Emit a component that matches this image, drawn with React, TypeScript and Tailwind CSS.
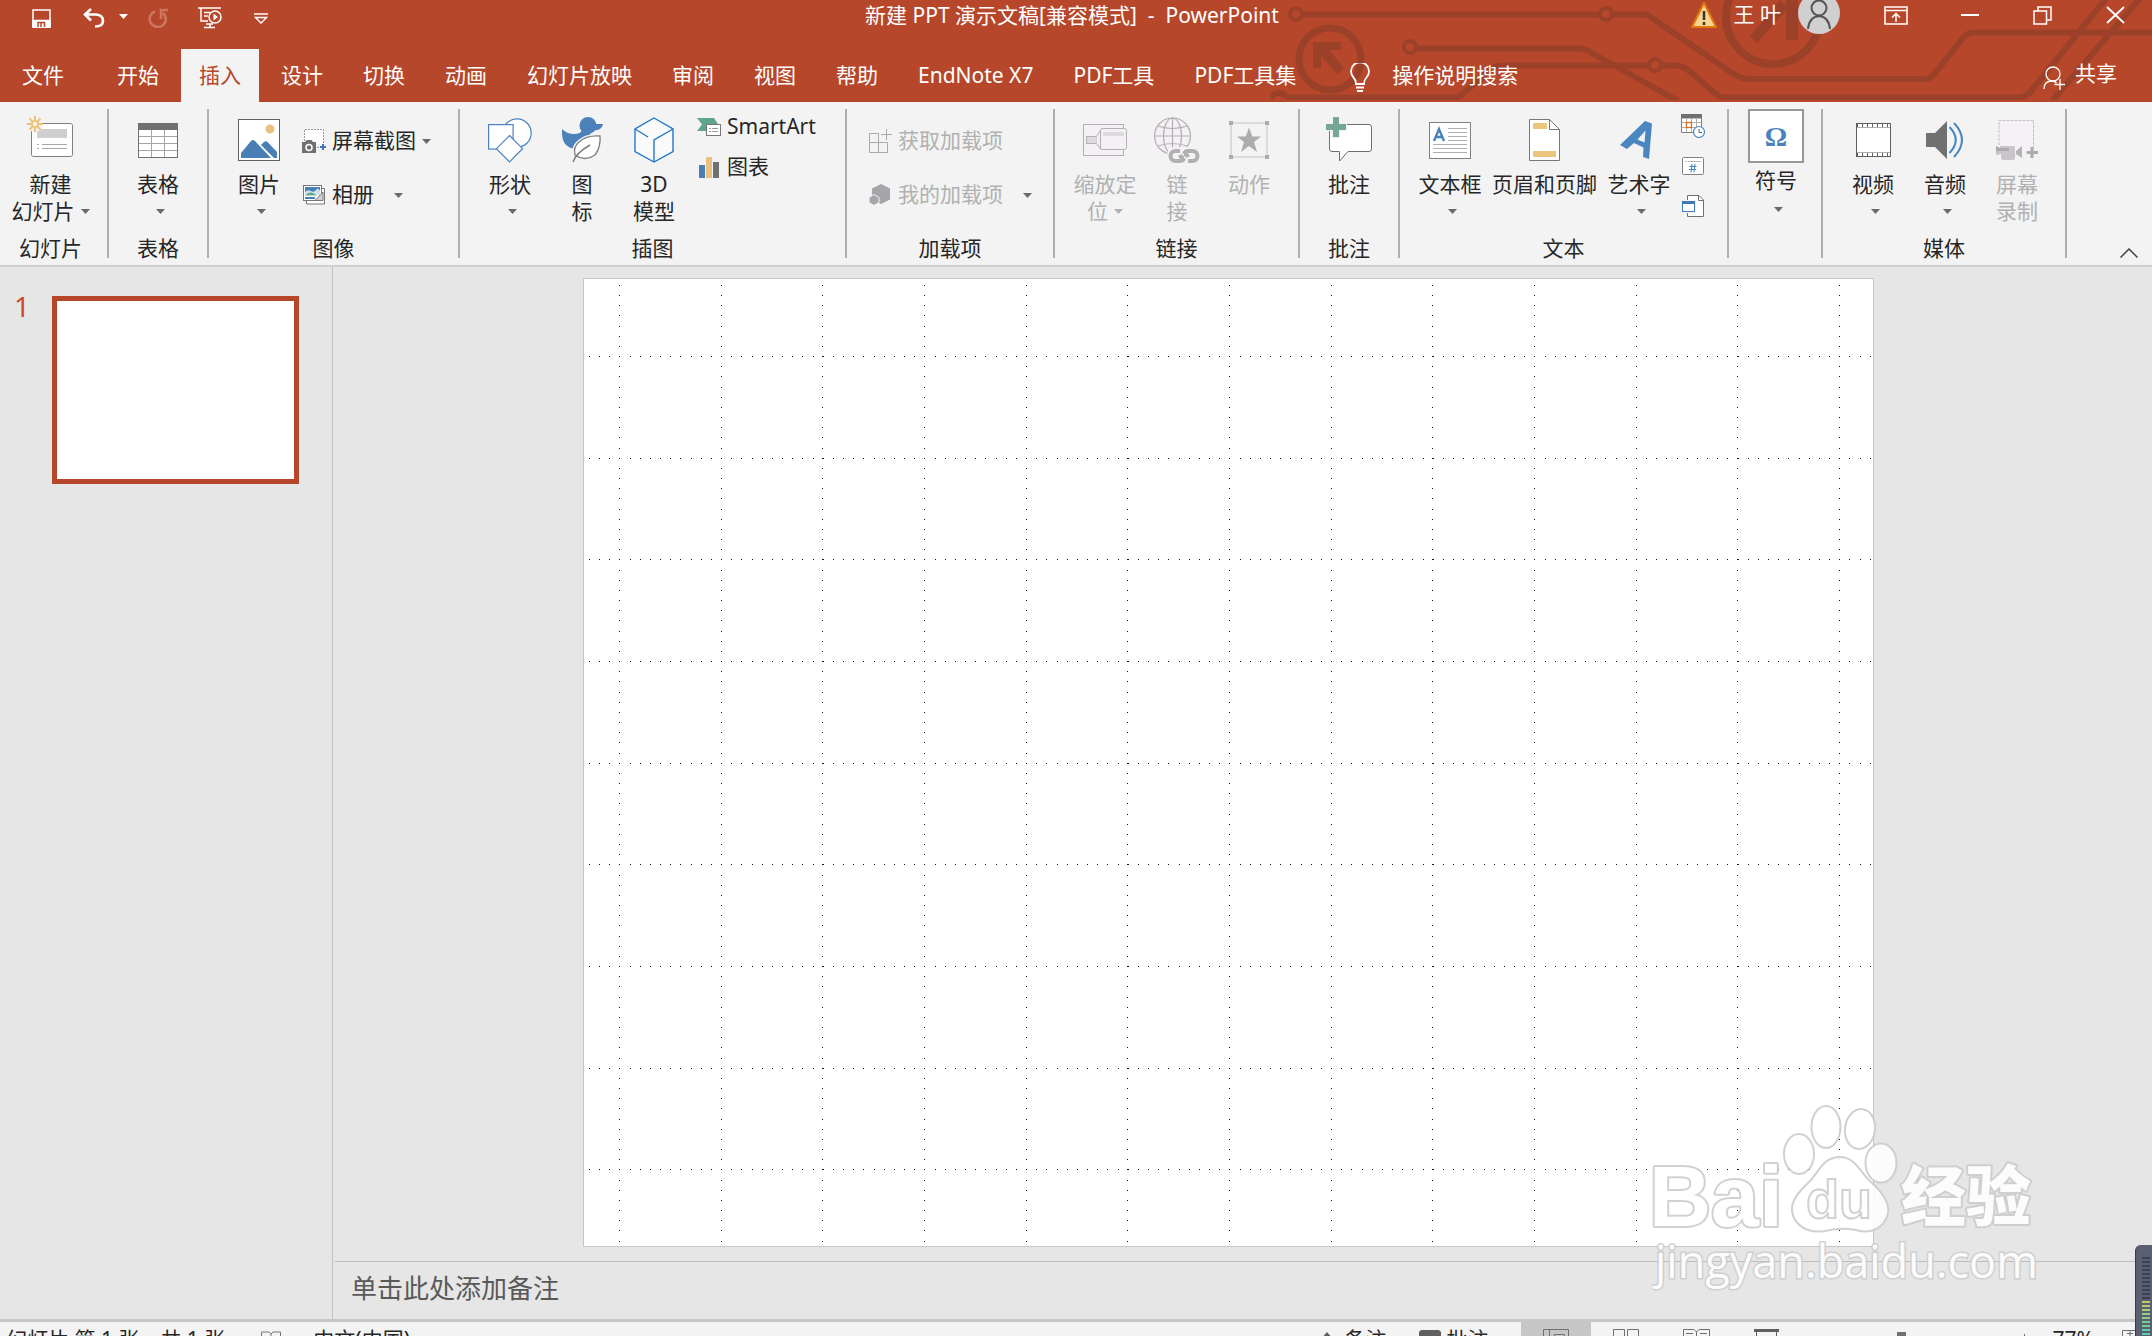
import React from "react"

interface IconProps {
  className?: string
}

const tabs: string[] = ["开始", "插入", "设计", "切换", "动画", "幻灯片放映", "审阅", "视图", "帮助", "EndNote X7", "PDF工具", "PDF工具集"]

/* ---------- shared pieces ---------- */

const Arrow: React.FC<IconProps> = ({ className = "" }) => (
  <svg width="9" height="5" viewBox="0 0 9 5" className={`shrink-0 fill-current ${className}`}>
    <path d="M0 0H9L4.5 5Z" />
  </svg>
)

interface GroupProps {
  label?: string
  className: string
  children: React.ReactNode
}

const Group: React.FC<GroupProps> = ({ label, className, children }) => (
  <section className={`flex h-full shrink-0 flex-col border-r-2 border-[#b0b0b0] ${className}`}>
    <div className="flex flex-1 items-start">{children}</div>
    <h2 className="h-5 text-center leading-5">{label}</h2>
  </section>
)

interface BigButtonProps {
  icon: React.ReactNode
  lines: string[]
  className?: string
  arrow?: boolean
  disabled?: boolean
}

const BigButton: React.FC<BigButtonProps> = ({ icon, lines, className = "w-[72px]", arrow, disabled }) => (
  <button
    disabled={disabled}
    className={`flex shrink-0 flex-col items-center whitespace-nowrap leading-[27px] ${className} ${disabled ? "text-[#b1b1b1]" : ""}`}
  >
    <span className="flex h-[62px] items-center">{icon}</span>
    <span>{lines[0]}</span>
    <span className={`flex h-[27px] items-center gap-1.5 ${lines[1] ? "" : "pl-1"}`}>
      {lines[1]}
      {arrow && <Arrow className={disabled ? "text-[#b1b1b1]" : "text-[#6a6a6a]"} />}
    </span>
  </button>
)

interface SmallButtonProps {
  icon: React.ReactNode
  text: string
  className: string
  arrow?: string
  disabled?: boolean
}

const SmallButton: React.FC<SmallButtonProps> = ({ icon, text, className, arrow, disabled }) => (
  <button disabled={disabled} className={`flex items-center whitespace-nowrap ${className} ${disabled ? "text-[#b1b1b1]" : ""}`}>
    <span className="mr-1.5 flex w-6 justify-center">{icon}</span>
    {text}
    {arrow && <Arrow className={`text-[#6a6a6a] ${arrow}`} />}
  </button>
)

/* ---------- ribbon icons ---------- */

const NewSlideIcon = () => (
  <svg width="48" height="50" viewBox="0 0 48 50" fill="none">
    <rect x="4.5" y="8.5" width="41" height="33" rx="2" fill="#fff" stroke="#808080" />
    <rect x="10" y="14" width="30" height="9" fill="#cfcfcf" />
    <path d="M10 29.5h2M15 29.5h25M10 33.5h2M15 33.5h25" stroke="#a8a8a8" />
    <circle cx="8" cy="9" r="8" fill="#f3f3f3" />
    <path d="M8 1v5M8 12v5M0 9h5M11 9h5M2.5 3.5l3.5 3.5M10 11l3.5 3.5M13.5 3.5L10 7M6 11l-3.5 3.5" stroke="#edc175" strokeWidth="2" />
    <circle cx="8" cy="9" r="3" stroke="#edc175" strokeWidth="1.5" />
  </svg>
)

const TableIcon = () => (
  <svg width="40" height="35" viewBox="0 0 40 35" fill="none">
    <rect x="0.5" y="0.5" width="39" height="34" fill="#fff" stroke="#707070" />
    <path d="M1 13.5h38M1 20.5h38M1 27.5h38M13.5 7v27M26.5 7v27" stroke="#a5a5a5" />
    <rect width="40" height="7" fill="#707070" />
  </svg>
)

const PictureIcon = () => (
  <svg width="42" height="42" viewBox="0 0 42 42" fill="none">
    <rect x="0.5" y="0.5" width="41" height="41" fill="#fff" stroke="#606060" />
    <circle cx="32" cy="10" r="4.5" fill="#e9c282" />
    <path d="M3 39V34L13 22Q15 20 17 22L33 39Z" fill="#4a7fb5" />
    <path d="M23 26L26 23Q28 21.500 30 23.500L39 33V39H36Z" fill="#4a7fb5" />
  </svg>
)

const ScreenshotIcon = () => (
  <svg width="24" height="24" viewBox="0 0 24 24" fill="none">
    <path d="M2.500 12V0.500H21.500V16M12 18.500h5" stroke="#9a9a9a" strokeDasharray="2 1" fill="#fff" />
    <path d="M0 13h3l1.500-2h5l1.500 2h3v11H0z" fill="#707070" />
    <circle cx="7" cy="18.500" r="3" stroke="#fff" strokeWidth="1.500" />
    <path d="M21 15v6M18 18h6" stroke="#3f79b8" strokeWidth="2" />
  </svg>
)

const AlbumIcon = () => (
  <svg width="22" height="20" viewBox="0 0 22 20" fill="none">
    <path d="M3.500 3.500H21.500V19H3.500z" fill="#fff" stroke="#777" />
    <rect x="0.500" y="0.500" width="18" height="15" fill="#fff" stroke="#777" />
    <rect x="2" y="2" width="15" height="5" fill="#4a7fb5" />
    <path d="M2 7q3-3 6-1t5-1 4 1v4H2z" fill="#cfe0f0" />
    <path d="M2 10.500q4-4 8-2.500l4 2.500z" fill="#67a68c" />
    <path d="M2 13h10" stroke="#4a7fb5" strokeWidth="2" />
    <path d="M12 15.500l8-8.500v8.500z" fill="#d0d0d0" stroke="#777" />
  </svg>
)

const ShapesIcon = () => (
  <svg width="44" height="45" viewBox="0 0 44 45" fill="#fff" stroke="#4a82be" strokeWidth="1.200">
    <circle cx="29" cy="15" r="14.200" />
    <rect x="0.600" y="6.600" width="24.500" height="24.500" />
    <path d="M21.500 17.500L34.500 30.700L21.500 44L8.500 30.700Z" />
  </svg>
)

const DuckIcon = () => (
  <svg width="42" height="46" viewBox="0 0 42 46" fill="none">
    <g fill="#4a82b9">
      <circle cx="27" cy="8.500" r="8.500" />
      <path d="M32 7H42Q41 13 33 13.500Z" />
      <path d="M1 12Q6 17 13 17Q20 17 21 13H31Q27 16 31 19L24 28L14 32Q1 30 1 16Z" />
    </g>
    <path d="M39 19Q26 18 18 25Q12 30 14 37Q24 45 34 38Q40 30 39 19Z" fill="#fff" stroke="#f3f3f3" strokeWidth="4" />
    <path d="M39 19Q26 18 18 25Q12 30 14 38Q24 45 34 38Q40 30 39 19Z" fill="#fff" stroke="#7d7d7d" strokeWidth="1.300" />
    <path d="M12 45Q15 36 29 28" stroke="#7d7d7d" strokeWidth="1.500" />
  </svg>
)

const CubeIcon = () => (
  <svg width="40" height="46" viewBox="0 0 40 46" fill="#fafafa" stroke="#1f78c8" strokeWidth="1.400">
    <path d="M20 1L39 12V34.500L20 45L1 34.500V12Z" />
    <path d="M1 12L14 20M39 12L20 23V45" fill="none" />
  </svg>
)

const SmartArtIcon = () => (
  <svg width="24" height="18" viewBox="0 0 24 18" fill="none">
    <path d="M0 0H17L21 6H11V13H0L5 6.500Z" fill="#5fa58c" />
    <rect x="9.500" y="6.500" width="14" height="11" fill="#fff" stroke="#777" />
    <path d="M12 10.500h2M15 10.500h6M12 13.500h2M15 13.500h6" stroke="#999" />
  </svg>
)

const ChartIcon = () => (
  <svg width="20" height="21" viewBox="0 0 20 21">
    <rect y="8" width="6" height="13" fill="#4a7fb5" />
    <rect x="7" width="6" height="21" fill="#e9c282" />
    <rect x="14" y="5" width="6" height="16" fill="#707070" />
  </svg>
)

const GetAddInsIcon = () => (
  <svg width="23" height="24" viewBox="0 0 23 24" fill="none" stroke="#a9a9a9">
    <path d="M9.500 4.500H0.500V23.500H18.500V13.500H0.500M9.500 4.500V23.500M17.500 0V11M12 5.500H23" />
  </svg>
)

const MyAddInsIcon = () => (
  <svg width="22" height="22" viewBox="0 0 22 22" fill="#a7a5a9">
    <path d="M12 0L21 4.500V15.500L12 20L3 15.500V4.500Z" />
    <path d="M5 10.500L10 13.500V18.500L5 21.500L0 18.500V13.500Z" stroke="#f3f3f3" />
  </svg>
)

const ZoomIcon = () => (
  <svg width="44" height="33" viewBox="0 0 44 33" fill="#f4f0f5" stroke="#b3b0b4">
    <rect x="0.500" y="0.500" width="40" height="31" />
    <rect x="3.500" y="12.500" width="10" height="7" fill="#dcdadd" />
    <path d="M13.500 12.500L18 5.500V25.500L13.500 19.500" />
    <rect x="17.500" y="4.500" width="26" height="21" rx="2" />
    <rect x="20" y="8" width="21" height="4" fill="#dcdadd" stroke="none" />
  </svg>
)

const LinkIcon = () => (
  <svg width="46" height="46" viewBox="0 0 46 46" fill="none" stroke="#b3b0b4" strokeWidth="1.200">
    <circle cx="18.500" cy="19" r="18" fill="#f4f0f5" />
    <ellipse cx="18.500" cy="19" rx="9" ry="18" />
    <path d="M0 19H37M18.500 1V37M4 9Q18 14 33 9M4 29Q18 24 33 29" />
    <rect x="13" y="30" width="34" height="17" rx="8" fill="#f3f3f3" stroke="none" />
    <path d="M26 34H21.500A5 5 0 0 0 21.500 44H26Q29 44 30 41M34 44H38.500A5 5 0 0 0 38.500 34H34Q31 34 30 37M26 38Q27 41 30 41M30 37Q33 37 34 40" strokeWidth="4" />
  </svg>
)

const ActionIcon = () => (
  <svg width="40" height="39" viewBox="0 0 40 39" fill="#adabae">
    <rect x="2" y="2" width="36" height="34" fill="none" stroke="#c4c4c4" />
    <path d="M0 0h4v4H0zM36 0h4v4H36zM0 34h4v4H0zM36 34h4v4H36z" />
    <path d="M20 6.500L23.300 15.500H32L25 21L28 31L20 25L12 31L15 21L8 15.500H16.700Z" />
  </svg>
)

const CommentIcon = () => (
  <svg width="46" height="46" viewBox="0 0 46 46">
    <path d="M6 7.500H43Q45.500 7.500 45.500 10V32Q45.500 34.500 43 34.500H22L13.500 44V34.500H6Q3.500 34.500 3.500 32V10Z" fill="#fff" stroke="#707070" />
    <path d="M5-1h9v6h7v9h-7v7H5v-7h-6V5h6z" fill="#f3f3f3" />
    <path d="M7 0h6v7h7v6h-7v7H7v-7H0V7h7z" fill="#74a895" />
  </svg>
)

const TextBoxIcon = () => (
  <svg width="42" height="37" viewBox="0 0 42 37" fill="none">
    <rect x="0.500" y="0.500" width="41" height="36" fill="#fff" stroke="#808080" />
    <path d="M19 6.500H38M19 10.500H38M19 14.500H38M19 18.500H38M4 22.500H38M4 26.500H38M4 30.500H38" stroke="#b0b0b0" />
    <path d="M5 19L10 7L15 19M7 15H13" stroke="#4a82be" strokeWidth="2.400" />
  </svg>
)

const HeaderFooterIcon = () => (
  <svg width="31" height="42" viewBox="0 0 31 42">
    <path d="M0.500 0.500H20.500L30.500 10.500V41.500H0.500Z" fill="#fff" stroke="#777" />
    <path d="M20.500 0.500V10.500H30.500" fill="none" stroke="#777" />
    <path d="M4 4H18V10H4ZM4 32H27V38H4Z" fill="#edc67e" />
  </svg>
)

const WordArtIcon = () => (
  <svg width="38" height="40" viewBox="0 0 38 40" fill="#4a86bf">
    <path fillRule="evenodd" d="M0 25L25 1L32 3.500L29 39L23 37L23.500 27.500L14 23L7 29ZM17.500 19.500L24.500 22.500L25.500 10.500Z" />
  </svg>
)

const DateIcon = () => (
  <svg width="25" height="24" viewBox="0 0 25 24" fill="none">
    <path d="M0.500 4H20.500V18.500H0.500Z" fill="#fff" stroke="#808080" />
    <path d="M5.500 4v14M10.500 4v14M15.500 4v14M1 8.500h19M1 13.500h19" stroke="#b0b0b0" />
    <rect width="21" height="4" fill="#707070" />
    <rect x="5.500" y="8.500" width="5" height="5" fill="#fff" stroke="#d8701c" strokeWidth="1.300" />
    <circle cx="18" cy="18" r="5.500" fill="#fff" stroke="#4a86bf" strokeWidth="1.200" />
    <path d="M18 15v3.500h3" stroke="#606060" />
  </svg>
)

const NumberIcon = () => (
  <svg width="22" height="18" viewBox="0 0 22 18" fill="none">
    <rect x="0.500" y="0.500" width="21" height="17" rx="1" fill="#fff" stroke="#808080" />
    <path d="M3 4.500h2M6 4.500h13" stroke="#b5b5b5" />
    <path d="M10 7L9 15.500M13 7L12 15.500M7.500 9.500H14.500M7 12.500H14" stroke="#4a82be" />
  </svg>
)

const ObjectIcon = () => (
  <svg width="22" height="22" viewBox="0 0 22 22">
    <path d="M5.500 0.500H17L21.500 5V21.500H5.500Z" fill="#fff" stroke="#707070" />
    <path d="M16.500 0.500V5.500H21.500" fill="none" stroke="#707070" />
    <rect x="-1" y="5" width="15" height="13" fill="#f3f3f3" />
    <rect x="0.500" y="6.500" width="12" height="10" fill="#fff" stroke="#3f79b8" />
    <rect y="6" width="13" height="3" fill="#3f79b8" />
  </svg>
)

const VideoIcon = () => (
  <svg width="35" height="34" viewBox="0 0 35 34" fill="none">
    <rect x="0.500" y="0.500" width="34" height="33" fill="#fff" stroke="#606060" />
    <path d="M1 2.500H34M1 31.500H34" stroke="#606060" strokeWidth="4" />
    <path d="M2 2.500H34M2 31.500H34" stroke="#fff" strokeWidth="3" strokeDasharray="4 1" />
  </svg>
)

const AudioIcon = () => (
  <svg width="38" height="38" viewBox="0 0 38 38" fill="none">
    <path d="M0 12H9L21 0V38L9 26H0Z" fill="#707070" />
    <path d="M23.500 6Q36 19 23.500 32M28 2Q44 19 28 36" stroke="#4a86bf" strokeWidth="2" />
  </svg>
)

const RecordIcon = () => (
  <svg width="42" height="40" viewBox="0 0 42 40" fill="none">
    <path d="M3 25V0.500H37.500V28" fill="#f5f1f6" stroke="#c2c2c2" strokeDasharray="3 1" />
    <path d="M0 26L4 28V26H17Q19 26 19 28V38Q19 40 17 40H7Q5 40 5 38V34L0 35Z" fill="#c8c6c9" />
    <path d="M0 26L4 28H13V31H0Z" fill="#adabae" />
    <path d="M20 31L26 26V38L20 34Z" fill="#b5b3b6" />
    <path d="M36 27V38M30.500 32.500H42" stroke="#adabae" strokeWidth="3" />
  </svg>
)

/* ---------- title bar ---------- */

const Circuit = () => (
  <svg width="882" height="100" viewBox="0 0 882 100" fill="none" stroke="#9b412a" strokeWidth="6" className="absolute right-0 top-0">
    <circle cx="26" cy="14" r="6" strokeWidth="4" />
    <path d="M33 14.500H329M343 14.500H377L462 73Q470 79 480 79H654Q661 79 665 73L693 38Q697 32.500 704 32.500H882" />
    <circle cx="336" cy="14" r="6" strokeWidth="4" />
    <circle cx="60" cy="59" r="31" strokeWidth="7" />
    <path d="M43 42H71V50H59L74 68L67 74L51 56V68H43Z" fill="#9b412a" stroke="none" />
    <circle cx="140" cy="47" r="6" strokeWidth="4" />
    <path d="M147 48.500H310Q316 48.500 322 53L408 101" />
    <path d="M1 99A8 8 0 0 1 16 97.500M16 97.500H184Q190 97.500 195 92L220 70Q225 65.500 233 65.500H378M392 65.500H404Q412 65.500 418 70L446 94Q450 97.500 456 97.500H748Q757 97.500 762 90L838 -4M782 101L872 -4" />
    <circle cx="385" cy="65" r="6" strokeWidth="4" />
    <circle cx="503" cy="17" r="47" strokeWidth="8" />
    <path d="M516 0V40H528V0ZM510 0L480 36L487 43L518 8Z" fill="#9b412a" stroke="none" />
  </svg>
)

const TitleBar = () => (
  <div className="relative flex h-[49px] items-start justify-between">
    <div className="flex h-9 items-center pl-8 text-white">
      <button aria-label="保存" className="mr-8">
        <svg width="19" height="19" viewBox="0 0 19 19" fill="none" stroke="#fff" strokeWidth="1.500">
          <path d="M1 1H18V18H1Z" />
          <path d="M1 11.500H18V18H1Z" fill="#fff" />
          <path d="M6 18V13.500H12.500V18M9 14v4" stroke="#b7472a" />
        </svg>
      </button>
      <button aria-label="撤消">
        <svg width="22" height="20" viewBox="0 0 22 20" fill="none" stroke="#fff" strokeWidth="2.600">
          <path d="M8 1L2 6.500L8 12.500M2.500 6.500H13Q20 7 20 13Q20 18.500 12 18.500" />
        </svg>
      </button>
      <Arrow className="mb-1 ml-3.5" />
      <button aria-label="恢复" className="ml-5">
        <svg width="20" height="20" viewBox="0 0 20 20" fill="none" stroke="#cb765f" strokeWidth="2.600">
          <path d="M7 3.500A8 8 0 1 0 15 5M13 11V2H20" />
        </svg>
      </button>
      <button aria-label="从头开始放映" className="ml-[30px]">
        <svg width="24" height="22" viewBox="0 0 24 22" fill="none" stroke="#fff" strokeWidth="1.500">
          <path d="M0 1H23M3 1V14H10M6 5.500H12M6 9H10M12 17V20M6 20.500H17M8 17H15" />
          <circle cx="17" cy="10" r="6" fill="#b7472a" />
          <path d="M15.500 6.500L20 10L15.500 13.500Z" fill="#fff" stroke="none" />
        </svg>
      </button>
      <button aria-label="自定义快速访问工具栏" className="ml-8">
        <svg width="14" height="11" viewBox="0 0 14 11" fill="none" stroke="#fff" strokeWidth="1.300">
          <path d="M0 1H14M1.500 4.500H12.500L7 10Z" />
        </svg>
      </button>
    </div>
    <h1 className="absolute inset-x-0 top-0 -ml-2 whitespace-pre text-center leading-[31px] text-white">新建 PPT 演示文稿[兼容模式]  -  PowerPoint</h1>
    <Circuit />
    <div className="relative flex h-[30px] items-center pr-[27px] text-white">
      <svg width="26" height="26" viewBox="0 0 26 26" className="mr-[17px]">
        <path d="M13 1L25 25H1Z" fill="#fbd58c" stroke="#e0780c" strokeWidth="2" />
        <path d="M13 9V18M13 20V23" stroke="#333" strokeWidth="2.500" />
      </svg>
      <span className="mr-[17px]">王 叶</span>
      <svg width="42" height="42" viewBox="0 0 42 42" fill="none" className="-mt-1 mr-11">
        <circle cx="21" cy="21" r="21" fill="#d0d0d0" />
        <circle cx="21" cy="16" r="7.500" stroke="#555" strokeWidth="2" />
        <path d="M10 37Q11 25 21 24Q31 25 32 37" stroke="#555" strokeWidth="2" />
      </svg>
      <button aria-label="功能区显示选项" className="mr-[53px]">
        <svg width="24" height="19" viewBox="0 0 24 19" fill="none" stroke="#fff" strokeWidth="1.500">
          <path d="M1 1H23V18H1ZM1 4.500H23M12 16V8M8 11.500L12 7.500L16 11.500" />
        </svg>
      </button>
      <button aria-label="最小化" className="mr-[54px]">
        <svg width="18" height="20" viewBox="0 0 18 20" stroke="#fff" strokeWidth="2"><path d="M0 10H18" /></svg>
      </button>
      <button aria-label="还原" className="mr-[54px]">
        <svg width="19" height="19" viewBox="0 0 19 19" fill="none" stroke="#fff" strokeWidth="1.500">
          <path d="M1 5H13.500V18H1ZM5 5V1H18V14H13.500" />
        </svg>
      </button>
      <button aria-label="关闭">
        <svg width="19" height="18" viewBox="0 0 19 18" stroke="#fff" strokeWidth="1.800"><path d="M1 1L18 17M18 1L1 17" /></svg>
      </button>
    </div>
  </div>
)

const TabBar = () => (
  <nav className="relative flex h-[53px] items-stretch gap-1 whitespace-nowrap pl-1 text-white">
    <button className="mr-[13px] px-[18px]">文件</button>
    {tabs.map((tab) => (
      <button key={tab} className={`px-[18px] ${tab === "插入" ? "bg-[#f3f3f3] text-[#b7472a]" : ""}`}>
        {tab}
      </button>
    ))}
    <button className="ml-8 flex items-center gap-[22px]">
      <svg width="20" height="29" viewBox="0 0 20 29" fill="none" stroke="#fff" strokeWidth="1.800" className="mt-1">
        <path d="M6 21Q6 17 3.500 14.500A9 9 0 1 1 16.500 14.500Q14 17 14 21ZM6 24.500H14M7 28H13" />
      </svg>
      操作说明搜索
    </button>
    <button className="ml-auto mr-[35px] flex items-center gap-2.5 pb-1">
      <svg width="22" height="24" viewBox="0 0 22 24" fill="none" stroke="#fff" strokeWidth="1.300" className="mt-2">
        <circle cx="10" cy="8" r="7" />
        <path d="M1 23Q1 15 9 15Q12 15 13.500 17M17 13V24M11.500 18.500H22" />
      </svg>
      共享
    </button>
  </nav>
)

/* ---------- ribbon ---------- */

const Ribbon = () => (
  <div className="flex h-[165px] shrink-0 border-b-2 border-[#d0d0d0] bg-[#f3f3f3] py-[7px] text-[#262626]">
    <Group label="幻灯片" className="w-[109px] pr-1.5">
      <BigButton className="w-full" icon={<NewSlideIcon />} lines={["新建", "幻灯片"]} arrow />
    </Group>
    <Group label="表格" className="w-[100px]">
      <BigButton className="w-full" icon={<TableIcon />} lines={["表格"]} arrow />
    </Group>
    <Group label="图像" className="w-[251px]">
      <BigButton className="ml-3.5 w-[72px]" icon={<PictureIcon />} lines={["图片"]} arrow />
      <div className="ml-[7px] flex flex-col pt-[5px]">
        <SmallButton className="h-[54px]" icon={<ScreenshotIcon />} text="屏幕截图" arrow="ml-1.5" />
        <SmallButton className="h-[54px]" icon={<AlbumIcon />} text="相册" arrow="ml-5" />
      </div>
    </Group>
    <Group label="插图" className="w-[387px]">
      <BigButton className="ml-3.5 w-[72px]" icon={<ShapesIcon />} lines={["形状"]} arrow />
      <BigButton icon={<DuckIcon />} lines={["图", "标"]} />
      <BigButton icon={<CubeIcon />} lines={["3D", "模型"]} />
      <div className="ml-[7px] flex flex-col gap-1">
        <SmallButton className="h-9" icon={<SmartArtIcon />} text="SmartArt" />
        <SmallButton className="h-9" icon={<ChartIcon />} text="图表" />
      </div>
    </Group>
    <Group label="加载项" className="w-[208px]">
      <div className="ml-[21px] flex flex-col pt-[5px]">
        <SmallButton className="h-[54px]" icon={<GetAddInsIcon />} text="获取加载项" disabled />
        <SmallButton className="h-[54px]" icon={<MyAddInsIcon />} text="我的加载项" arrow="ml-5" disabled />
      </div>
    </Group>
    <Group label="链接" className="w-[245px]">
      <BigButton className="ml-2.5 w-20" icon={<ZoomIcon />} lines={["缩放定", "位"]} arrow disabled />
      <BigButton className="w-16" icon={<LinkIcon />} lines={["链", "接"]} disabled />
      <BigButton className="w-20" icon={<ActionIcon />} lines={["动作"]} disabled />
    </Group>
    <Group label="批注" className="w-[100px]">
      <BigButton className="w-full" icon={<CommentIcon />} lines={["批注"]} />
    </Group>
    <Group label="文本" className="w-[329px]">
      <BigButton className="ml-2 w-[84px]" icon={<TextBoxIcon />} lines={["文本框"]} arrow />
      <BigButton className="w-[105px]" icon={<HeaderFooterIcon />} lines={["页眉和页脚"]} />
      <BigButton className="w-[84px]" icon={<WordArtIcon />} lines={["艺术字"]} arrow />
      <div className="flex w-6 flex-col items-center gap-1.5">
        <button aria-label="日期和时间" className="flex h-[34px] items-center"><DateIcon /></button>
        <button aria-label="幻灯片编号" className="flex h-[34px] items-center"><NumberIcon /></button>
        <button aria-label="对象" className="flex h-[34px] items-center"><ObjectIcon /></button>
      </div>
    </Group>
    <Group className="w-[94px]">
      <button className="flex w-full flex-col items-center pl-0.5 leading-[27px]">
        <span className="mb-1 flex h-[54px] w-14 items-center justify-center border-2 border-[#979797] bg-white font-['Liberation_Serif',serif] text-[28px] font-bold text-[#4a82be]">
          Ω
        </span>
        <span>符号</span>
        <span className="flex h-[27px] items-center pl-1 pt-1">
          <Arrow className="text-[#6a6a6a]" />
        </span>
      </button>
    </Group>
    <Group label="媒体" className="w-[244px]">
      <BigButton className="ml-3.5 w-[72px]" icon={<VideoIcon />} lines={["视频"]} arrow />
      <BigButton icon={<AudioIcon />} lines={["音频"]} arrow />
      <BigButton icon={<RecordIcon />} lines={["屏幕", "录制"]} disabled />
    </Group>
    <button aria-label="折叠功能区" className="ml-auto mr-3.5 self-end">
      <svg width="18" height="10" viewBox="0 0 18 10" fill="none" stroke="#444" strokeWidth="1.500"><path d="M0.500 9.500L9 1L17.500 9.500" /></svg>
    </button>
  </div>
)

/* ---------- slide area ---------- */

// every guide line is a row of single dots, ten to a grid cell
const cell = 101.65
const gridDots = () => {
  let d = ""
  const dot = (x: number, y: number) => {
    d += `M${Math.round(x)} ${Math.round(y)}h1v1h-1z`
  }
  for (let c = 0; c < 13; c++) {
    for (let y = 7; y < 964; y += cell / 10) dot(36 + c * cell, y)
  }
  for (let r = 0; r < 9; r++) {
    for (let x = 6; x < 1290; x += cell / 10) dot(x, 78 + r * cell)
  }
  return d
}

const Slide = () => (
  <svg viewBox="0 0 1291 969" className="h-full max-w-full" shapeRendering="crispEdges">
    <rect width="1291" height="969" fill="#c6c6c6" />
    <rect x="1" y="1" width="1289" height="967" fill="#fff" />
    <path d={gridDots()} fill="#111" />
  </svg>
)

const Watermark = () => (
  <div className="absolute bottom-[43px] right-[110px] h-[192px] w-[390px] opacity-90">
    <svg width="390" height="192" viewBox="0 0 390 192" fill="#fff" stroke="#cdcdcd" strokeWidth="2">
      <g strokeWidth="4" paintOrder="stroke" strokeLinejoin="round">
        <text x="-3" y="125" fontSize="86" className="font-['Liberation_Sans',sans-serif] font-bold">Bai</text>
        <text x="249" y="119" fontSize="65" className="font-['Noto_Sans_CJK_SC',sans-serif] font-black">经验</text>
      </g>
      <ellipse cx="147" cy="53" rx="15" ry="20" />
      <ellipse cx="174" cy="26" rx="14.500" ry="21" />
      <ellipse cx="208" cy="28" rx="15" ry="20" transform="rotate(8 208 28)" />
      <ellipse cx="229" cy="62" rx="15.500" ry="19.500" />
      <path d="M188 56C203 56 208 71 219 81C230 91 238 101 236 112C233 126 220 134 204 129Q188 126 173 130C155 133 142 124 140 110C139 98 149 89 158 80C167 71 171 56 188 56Z" />
      <text x="154" y="117" fontSize="54" className="font-['Liberation_Sans',sans-serif] font-bold">du</text>
      <text x="3" y="177" fontSize="45" strokeWidth="3" paintOrder="stroke" className="font-['Open_Sans',sans-serif] font-medium">jingyan.baidu.com</text>
    </svg>
  </div>
)

const levelColors: string[] = [
  "bg-[#c3c862]", "bg-[#b9cc66]", "bg-[#a8cf70]", "bg-[#96d07a]", "bg-[#84d084]",
  "bg-[#76d08e]", "bg-[#6ad09a]", "bg-[#60cfa6]", "bg-[#58ceb2]", "bg-[#52ccc0]",
]

const LevelMeter = () => (
  <div className="absolute bottom-0 right-0 flex h-[91px] w-[17px] flex-col gap-0.5 rounded-tl-md border-l border-[#343b4a] bg-[#596072] pl-1.5 pt-3">
    {Array.from({ length: 11 }, (_, i) => (
      <span key={i} className="h-0.5 w-2 shrink-0 bg-[#3b414f]" />
    ))}
    {levelColors.map((color) => (
      <span key={color} className={`h-0.5 w-2 shrink-0 ${color}`} />
    ))}
  </div>
)

const Workspace = () => (
  <div className="flex min-h-0 flex-1 bg-[#e6e6e6]">
    <aside className="flex w-[333px] shrink-0 items-start border-r border-[#c0c0c0] pl-3.5 pt-[29px]">
      <span className="w-[38px] text-[28px] leading-5 text-[#d24726]">1</span>
      <button aria-label="幻灯片 1" className="h-[188px] w-[247px] border-[5px] border-[#b7472a] bg-white" />
    </aside>
    <main className="flex min-w-0 flex-1 flex-col pl-0.5">
      <div className="flex min-h-0 flex-1 justify-center pb-3.5 pr-[30px] pt-[11px]">
        <Slide />
      </div>
      <input
        aria-label="备注"
        placeholder="单击此处添加备注"
        className="h-[58px] shrink-0 border-t border-[#bdbdbd] bg-transparent pb-1.5 pl-4 text-[26px] outline-none placeholder:text-[#595959]"
      />
    </main>
  </div>
)

/* ---------- status bar ---------- */

const StatusBar = () => (
  <footer className="h-[17px] shrink-0 overflow-hidden border-t-[3px] border-[#c6c6c6] bg-[#f3f3f3] text-[#262626]">
    <div className="flex h-9 items-center whitespace-nowrap pl-1.5">
      <span className="whitespace-pre">幻灯片 第 1 张，共 1 张</span>
      <svg width="20" height="18" viewBox="0 0 20 18" fill="none" stroke="#777" className="ml-9">
        <path d="M0.500 1H8L10 3L12 1H19.500V17H0.500ZM10 3V17" />
      </svg>
      <span className="ml-8">中文(中国)</span>
      <button className="ml-auto mr-8 flex items-center gap-2.5">
        <svg width="16" height="16" viewBox="0 0 16 16" fill="#606060"><path d="M8 0L14 7H2ZM0 9H16V11H0Z" /></svg>
        备注
      </button>
      <button className="mr-8 flex items-center gap-1.5">
        <svg width="22" height="20" viewBox="0 0 22 20" fill="#606060"><path d="M2 0H20L22 2V14H12L6 20V14H0V2Z" /></svg>
        批注
      </button>
      <button aria-label="普通视图" className="flex h-full w-[70px] items-center justify-center bg-[#c6c6c6]">
        <svg width="26" height="22" viewBox="0 0 26 22" fill="none" stroke="#707070"><path d="M0.500 0.500H25.500V21.500H0.500ZM6.500 0.500V21.500M11.500 5.500H21.500V15.500H11.500Z" /></svg>
      </button>
      <button aria-label="幻灯片浏览" className="ml-[22px]">
        <svg width="26" height="22" viewBox="0 0 26 22" fill="none" stroke="#707070"><path d="M0.500 0.500H11.500V9.500H0.500ZM14.500 0.500H25.500V9.500H14.500ZM0.500 12.500H11.500V21.500H0.500ZM14.500 12.500H25.500V21.500H14.500Z" /></svg>
      </button>
      <button aria-label="阅读视图" className="ml-11">
        <svg width="27" height="22" viewBox="0 0 27 22" fill="none" stroke="#707070"><path d="M0.500 0.500H11L13.500 3L16 0.500H26.500V20H0.500ZM13.500 3V22M3 4.500H10M3 8.500H10M17 4.500H24M17 8.500H24" /></svg>
      </button>
      <button aria-label="幻灯片放映" className="ml-11">
        <svg width="25" height="22" viewBox="0 0 25 22" fill="none" stroke="#606060"><path d="M0 1.500H25" strokeWidth="3" /><path d="M2.500 3V15H22.500V3M6 7.500H19" /></svg>
      </button>
      <svg width="176" height="20" viewBox="0 0 176 20" className="ml-[78px]" fill="#707070">
        <path d="M0 9H10V10H0ZM40 2H49V18H40ZM14 9H150V10H14ZM64 6H66V14H64ZM161 9H173V10H161ZM167 4H168V15H167Z" />
      </svg>
      <span className="ml-5">77%</span>
      <button aria-label="适应窗口" className="ml-7 mr-1">
        <svg width="26" height="20" viewBox="0 0 26 20" fill="none" stroke="#707070"><path d="M0.500 0.500H25.500V19.500H0.500ZM8 0.500V6M5 3.500H11" /></svg>
      </button>
    </div>
  </footer>
)

export default function App() {
  return (
    <div className="relative flex h-screen flex-col overflow-hidden bg-[#e6e6e6] font-['Noto_Sans','Noto_Sans_CJK_SC',sans-serif] text-[21px]">
      <header className="shrink-0 bg-[#b7472a]">
        <TitleBar />
        <TabBar />
      </header>
      <Ribbon />
      <Workspace />
      <StatusBar />
      <Watermark />
      <LevelMeter />
    </div>
  )
}
